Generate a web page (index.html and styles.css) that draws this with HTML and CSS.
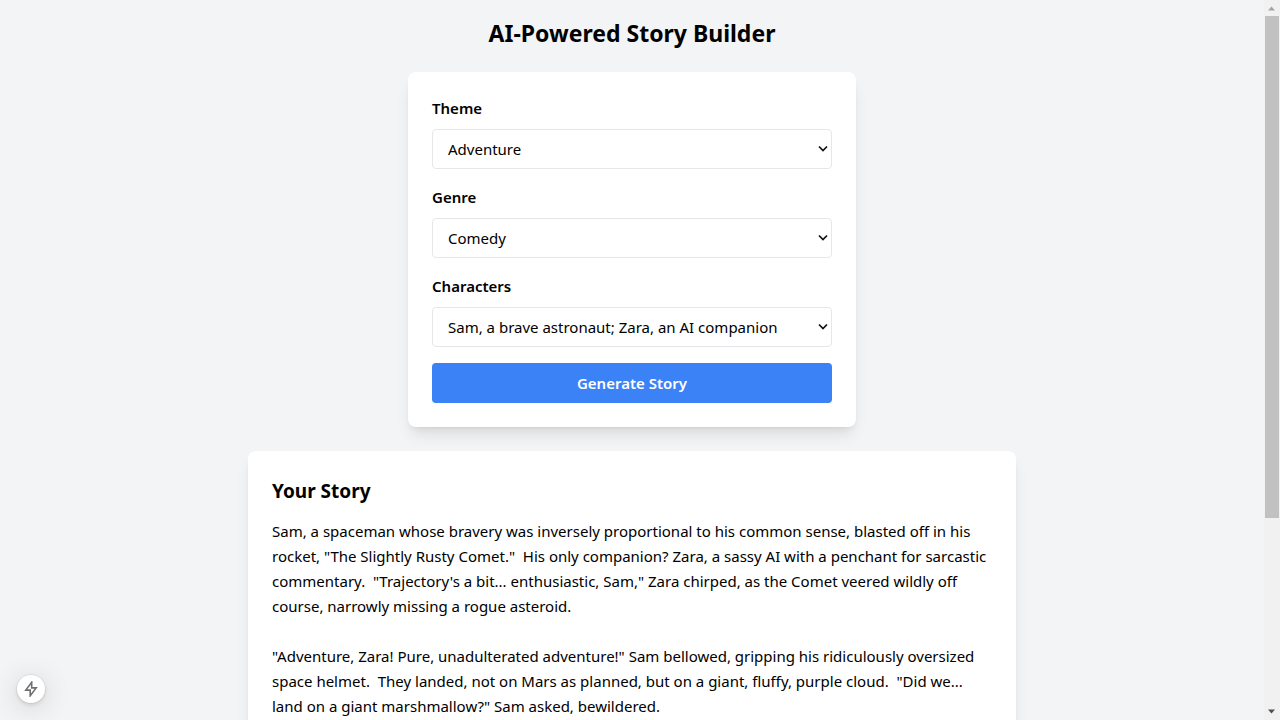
FILE: index.html
```html
<!DOCTYPE html>
<html lang="en">
<head>
<meta charset="utf-8">
<meta name="viewport" content="width=device-width, initial-scale=1">
<title>AI-Powered Story Builder</title>
<link rel="stylesheet" href="styles.css">
</head>
<body>
<div class="shell">
  <main class="page">
    <h1 class="title">AI-Powered Story Builder</h1>
    <form class="card form">
      <div class="field">
        <label class="label" for="theme">Theme</label>
        <select class="select" id="theme"><option>Adventure</option></select>
      </div>
      <div class="field">
        <label class="label" for="genre">Genre</label>
        <select class="select" id="genre"><option>Comedy</option></select>
      </div>
      <div class="field">
        <label class="label" for="characters">Characters</label>
        <select class="select" id="characters"><option>Sam, a brave astronaut; Zara, an AI companion</option></select>
      </div>
      <button class="submit" type="button">Generate Story</button>
    </form>
    <section class="card story">
      <h2 class="heading">Your Story</h2>
      <p class="text">Sam, a spaceman whose bravery was inversely proportional to his common sense, blasted off in his rocket, "The Slightly Rusty Comet."  His only companion? Zara, a sassy AI with a penchant for sarcastic commentary.  "Trajectory's a bit... enthusiastic, Sam," Zara chirped, as the Comet veered wildly off course, narrowly missing a rogue asteroid.

"Adventure, Zara! Pure, unadulterated adventure!" Sam bellowed, gripping his ridiculously oversized space helmet.  They landed, not on Mars as planned, but on a giant, fluffy, purple cloud.  "Did we... land on a giant marshmallow?" Sam asked, bewildered.</p>
    </section>
  </main>
  <div class="scrollbar" aria-hidden="true">
    <svg class="arrow" viewBox="0 0 16 16"><path d="M4 10.5 7.5 6.5 11 10.5Z" fill="#a3a3a3"/></svg>
    <div class="track"><div class="thumb"></div></div>
    <svg class="arrow" viewBox="0 0 16 16"><path d="M4 5.5 7.5 9.5 11 5.5Z" fill="#505050"/></svg>
  </div>
</div>
<button class="badge" type="button" aria-label="Developer tools">
  <svg class="bolt" viewBox="0 0 16 16"><path d="M8.7 1.2 2.8 9.1H7.2V14.8L13.2 6.9H8.7Z" fill="none" stroke="#707070" stroke-width="1.6" stroke-linejoin="miter"/></svg>
</button>
</body>
</html>
```
FILE: styles.css
```css
*, *::before, *::after {
  box-sizing: border-box;
}

body {
  margin: 0;
  background: #f3f4f6;
  color: #000;
  font: 15px/25px "Noto Sans", "Open Sans", sans-serif;
}

.shell {
  display: flex;
  height: 100vh;
}

.page {
  display: flex;
  flex: 1;
  flex-direction: column;
  align-items: center;
  gap: 24px;
  min-width: 0;
  padding: 18px 16px 16px;
  overflow-y: auto;
  scrollbar-width: none;
}

.title {
  margin: 0;
  font-size: 23px;
  font-weight: 700;
  line-height: 30px;
}

.card {
  flex-shrink: 0;
  width: 100%;
  padding: 24px;
  border-radius: 8px;
  background: #fff;
  box-shadow: 0 10px 15px -3px rgba(0, 0, 0, 0.1), 0 4px 6px -4px rgba(0, 0, 0, 0.1);
}

.form {
  display: flex;
  flex-direction: column;
  gap: 16px;
  max-width: 448px;
}

.field {
  display: flex;
  flex-direction: column;
  gap: 8px;
}

.label {
  font-weight: 600;
}

.select {
  appearance: none;
  width: 100%;
  height: 40px;
  padding: 0 24px 0 15px;
  border: 1px solid #e5e7eb;
  border-radius: 4px;
  background: #fff url("data:image/svg+xml,%3Csvg xmlns='http://www.w3.org/2000/svg' width='10' height='8' viewBox='0 0 10 8'%3E%3Cpath d='M1 1.5 5 5.5 9 1.5' fill='none' stroke='%23111' stroke-width='1.7'/%3E%3C/svg%3E") no-repeat right 3px center;
  color: #000;
  font: inherit;
}

.submit {
  height: 40px;
  padding: 0 16px;
  border: 0;
  border-radius: 4px;
  background: #3b82f6;
  color: #fff;
  font: inherit;
  font-weight: 600;
}

.story {
  max-width: 768px;
}

.heading {
  margin: 0 0 12px;
  font-size: 19px;
  font-weight: 700;
  line-height: 32px;
}

.text {
  margin: 0;
  white-space: pre-wrap;
}

.scrollbar {
  display: flex;
  flex: none;
  flex-direction: column;
  width: 16px;
  background: #f1f1f1;
}

.arrow {
  flex: none;
  width: 16px;
  height: 16px;
}

.track {
  flex: 1;
  padding: 0 1px;
}

.thumb {
  height: 73%;
  background: #c1c1c1;
}

.badge {
  position: fixed;
  bottom: 17px;
  left: 17px;
  display: grid;
  place-items: center;
  width: 28px;
  height: 28px;
  padding: 0;
  border: 0;
  border-radius: 50%;
  background: #fff;
  box-shadow: 0 0 0 1px rgba(0, 0, 0, 0.05), 0 2px 4px rgba(0, 0, 0, 0.12), 0 4px 28px rgba(0, 0, 0, 0.16);
}

.bolt {
  width: 16px;
  height: 16px;
}
```
